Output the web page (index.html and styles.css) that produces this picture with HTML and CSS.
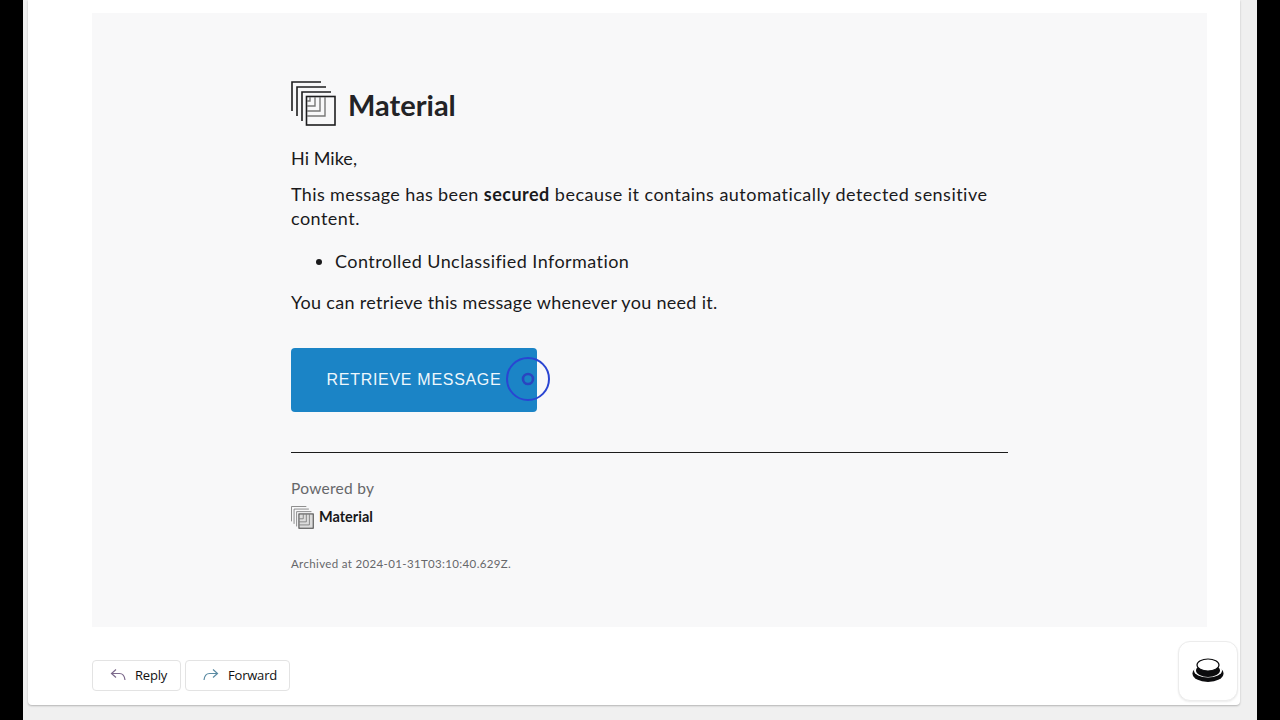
FILE: index.html
```html
<!DOCTYPE html>
<html>
<head>
    <meta charset="UTF-8">
    <title>Material message</title>
    <link rel="stylesheet" href="styles.css">
</head>
<body>
<div class="frame">
    <div class="card">
        <div class="email">
            <div class="brand">
                <svg class="brand-mark" viewBox="0 0 45 45" fill="none">
                    <g stroke="#1d1d1f" stroke-width="1.6">
                        <path d="M1 30V1H30"/>
                        <path d="M6 35V6H35"/>
                        <path d="M11 40V11H40"/>
                        <rect x="15.5" y="15.5" width="28.5" height="28.5"/>
                    </g>
                    <path d="M19 16V20H16M24 16V25H16M29 16V30H16M34 16V35H16" stroke="#777" stroke-width="1.4"/>
                </svg>
                <span class="brand-name">Material</span>
            </div>
            <p class="greeting">Hi Mike,</p>
            <p class="copy"><span class="lead">This message has been</span> <b>secured</b> because it contains automatically detected sensitive<br>content.</p>
            <ul class="reasons">
                <li>Controlled Unclassified Information</li>
            </ul>
            <p class="closing">You can retrieve this message whenever you need it.</p>
            <div class="action">
                <a class="retrieve" href="#">RETRIEVE MESSAGE</a>
                <svg class="cursor-ring" viewBox="0 0 46 46" fill="none">
                    <circle cx="23" cy="23" r="21" stroke="#2a45d2" stroke-width="2"/>
                    <circle cx="23" cy="23" r="5" stroke="#2a45c0" stroke-width="2.6"/>
                </svg>
            </div>
            <div class="rule"></div>
            <p class="powered">Powered by</p>
            <div class="brand-small">
                <svg class="brand-mark-small" viewBox="0 0 45 45" fill="none">
                    <g stroke="#777" stroke-width="1.6">
                        <path d="M1 30V1H30"/>
                        <path d="M6 35V6H35"/>
                        <path d="M11 40V11H40"/>
                    </g>
                    <rect x="15.5" y="15.5" width="28" height="28" fill="#dcdcdc" stroke="#444" stroke-width="2"/>
                    <path d="M24 16V25H16M30 16V31H16M36 16V37H16" stroke="#777" stroke-width="1.6"/>
                </svg>
                <span class="brand-small-name">Material</span>
            </div>
            <p class="archived">Archived at 2024-01-31T03:10:40.629Z.</p>
        </div>
        <div class="actions">
            <button class="mail-btn reply">
                <svg class="mail-icon" viewBox="0 0 16 14" fill="none" stroke="#7d6a8c" stroke-width="1.2">
                    <path d="M6 1.5L1.5 5.5L6 9.5M1.5 5.5H9.5C12.5 5.5 14.5 8 15 12"/>
                </svg>
                Reply
            </button>
            <button class="mail-btn forward">
                <svg class="mail-icon" viewBox="0 0 16 14" fill="none" stroke="#5b8ba3" stroke-width="1.2">
                    <path d="M10 1.5L14.5 5.5L10 9.5M14.5 5.5H6.5C3.5 5.5 1.5 8 1 12"/>
                </svg>
                Forward
            </button>
        </div>
    </div>
    <div class="float-btn">
        <svg viewBox="0 0 32 25" width="32" height="25">
            <ellipse cx="16" cy="15.5" rx="15.5" ry="8.5" fill="#0c0c0e"/>
            <ellipse cx="16" cy="12.5" rx="14" ry="7" fill="#fff"/>
            <ellipse cx="16" cy="12.5" rx="12" ry="6.5" fill="#0c0c0e"/>
            <ellipse cx="16" cy="7" rx="11" ry="6" fill="#fff" stroke="#0c0c0e" stroke-width="1.2"/>
        </svg>
    </div>
</div>
</body>
</html>
```

FILE: styles.css
```css
html, body {
    margin: 0;
    height: 720px;
    overflow: hidden;
    background-color: #000;
}
.frame {
    position: relative;
    margin: 0 23px;
    height: 720px;
    padding: 0 17px 0 5px;
    box-sizing: border-box;
    background-color: #f0f0f0;
}
.card {
    height: 705px;
    box-sizing: border-box;
    padding: 13px 33px 0 64px;
    background-color: #fff;
    border-radius: 0 0 4px 4px;
    box-shadow: 0 1px 2px rgba(0, 0, 0, 0.25);
}
.email {
    height: 614px;
    box-sizing: border-box;
    padding: 68px 0 0 199px;
    background-color: #f8f8f9;
    font-family: "Lato", sans-serif;
    font-size: 18px;
    line-height: 24px;
    color: #1a1a1c;
}
.brand {
    display: flex;
    align-items: center;
    gap: 12px;
    height: 45px;
}
.brand-mark {
    width: 45px;
    height: 45px;
}
.brand-name {
    font-size: 29px;
    font-weight: 700;
    color: #232326;
    padding-top: 2px;
}
.greeting {
    margin: 20px 0 0;
    letter-spacing: 0.05px;
}
.copy {
    width: 717px;
    margin: 12px 0 0;
    letter-spacing: 0.47px;
}
.lead {
    letter-spacing: 0.37px;
}
.copy b {
    letter-spacing: 0.48px;
}
.reasons {
    margin: 19px 0 0;
    padding-left: 44px;
    letter-spacing: 0.43px;
}
.closing {
    margin: 17px 0 0;
    letter-spacing: 0.3px;
}
.action {
    position: relative;
    width: 246px;
    margin-top: 34px;
}
.retrieve {
    display: block;
    height: 64px;
    border-radius: 4px;
    background-color: #1b84c6;
    color: #eef7fc;
    font-family: "Liberation Sans", sans-serif;
    font-size: 16px;
    line-height: 63px;
    letter-spacing: 0.7px;
    text-align: center;
    text-decoration: none;
}
.cursor-ring {
    position: absolute;
    left: 214px;
    top: 8px;
    width: 46px;
    height: 46px;
}
.rule {
    width: 717px;
    height: 1px;
    margin-top: 40px;
    background-color: #1c1c1c;
}
.powered {
    margin: 23px 0 0;
    font-size: 15.5px;
    line-height: 24px;
    letter-spacing: 0.28px;
    color: #66676a;
}
.brand-small {
    display: flex;
    align-items: center;
    gap: 5px;
    margin-top: 5px;
    height: 24px;
}
.brand-mark-small {
    width: 23px;
    height: 23px;
}
.brand-small-name {
    font-size: 14.5px;
    font-weight: 700;
    color: #17171a;
}
.archived {
    margin: 27px 0 0;
    font-size: 11.5px;
    line-height: 16px;
    letter-spacing: 0.35px;
    color: #66676a;
}
.actions {
    display: flex;
    gap: 4px;
    margin-top: 33px;
}
.mail-btn {
    display: flex;
    align-items: center;
    height: 31px;
    box-sizing: border-box;
    padding: 0 0 1px 17px;
    gap: 9px;
    background-color: #fff;
    border: 1px solid #e3e3e3;
    border-radius: 4px;
    font-family: "Open Sans", sans-serif;
    font-size: 13px;
    letter-spacing: -0.2px;
    color: #111;
}
.reply {
    width: 89px;
}
.forward {
    width: 105px;
}
.mail-icon {
    width: 16px;
    height: 14px;
}
.float-btn {
    position: absolute;
    right: 19px;
    top: 641px;
    display: flex;
    align-items: center;
    justify-content: center;
    width: 60px;
    height: 60px;
    padding-bottom: 1px;
    background-color: #fff;
    border: 1px solid #ececec;
    border-radius: 12px;
    box-sizing: border-box;
    box-shadow: 0 1px 2px rgba(0, 0, 0, 0.08);
}
```
